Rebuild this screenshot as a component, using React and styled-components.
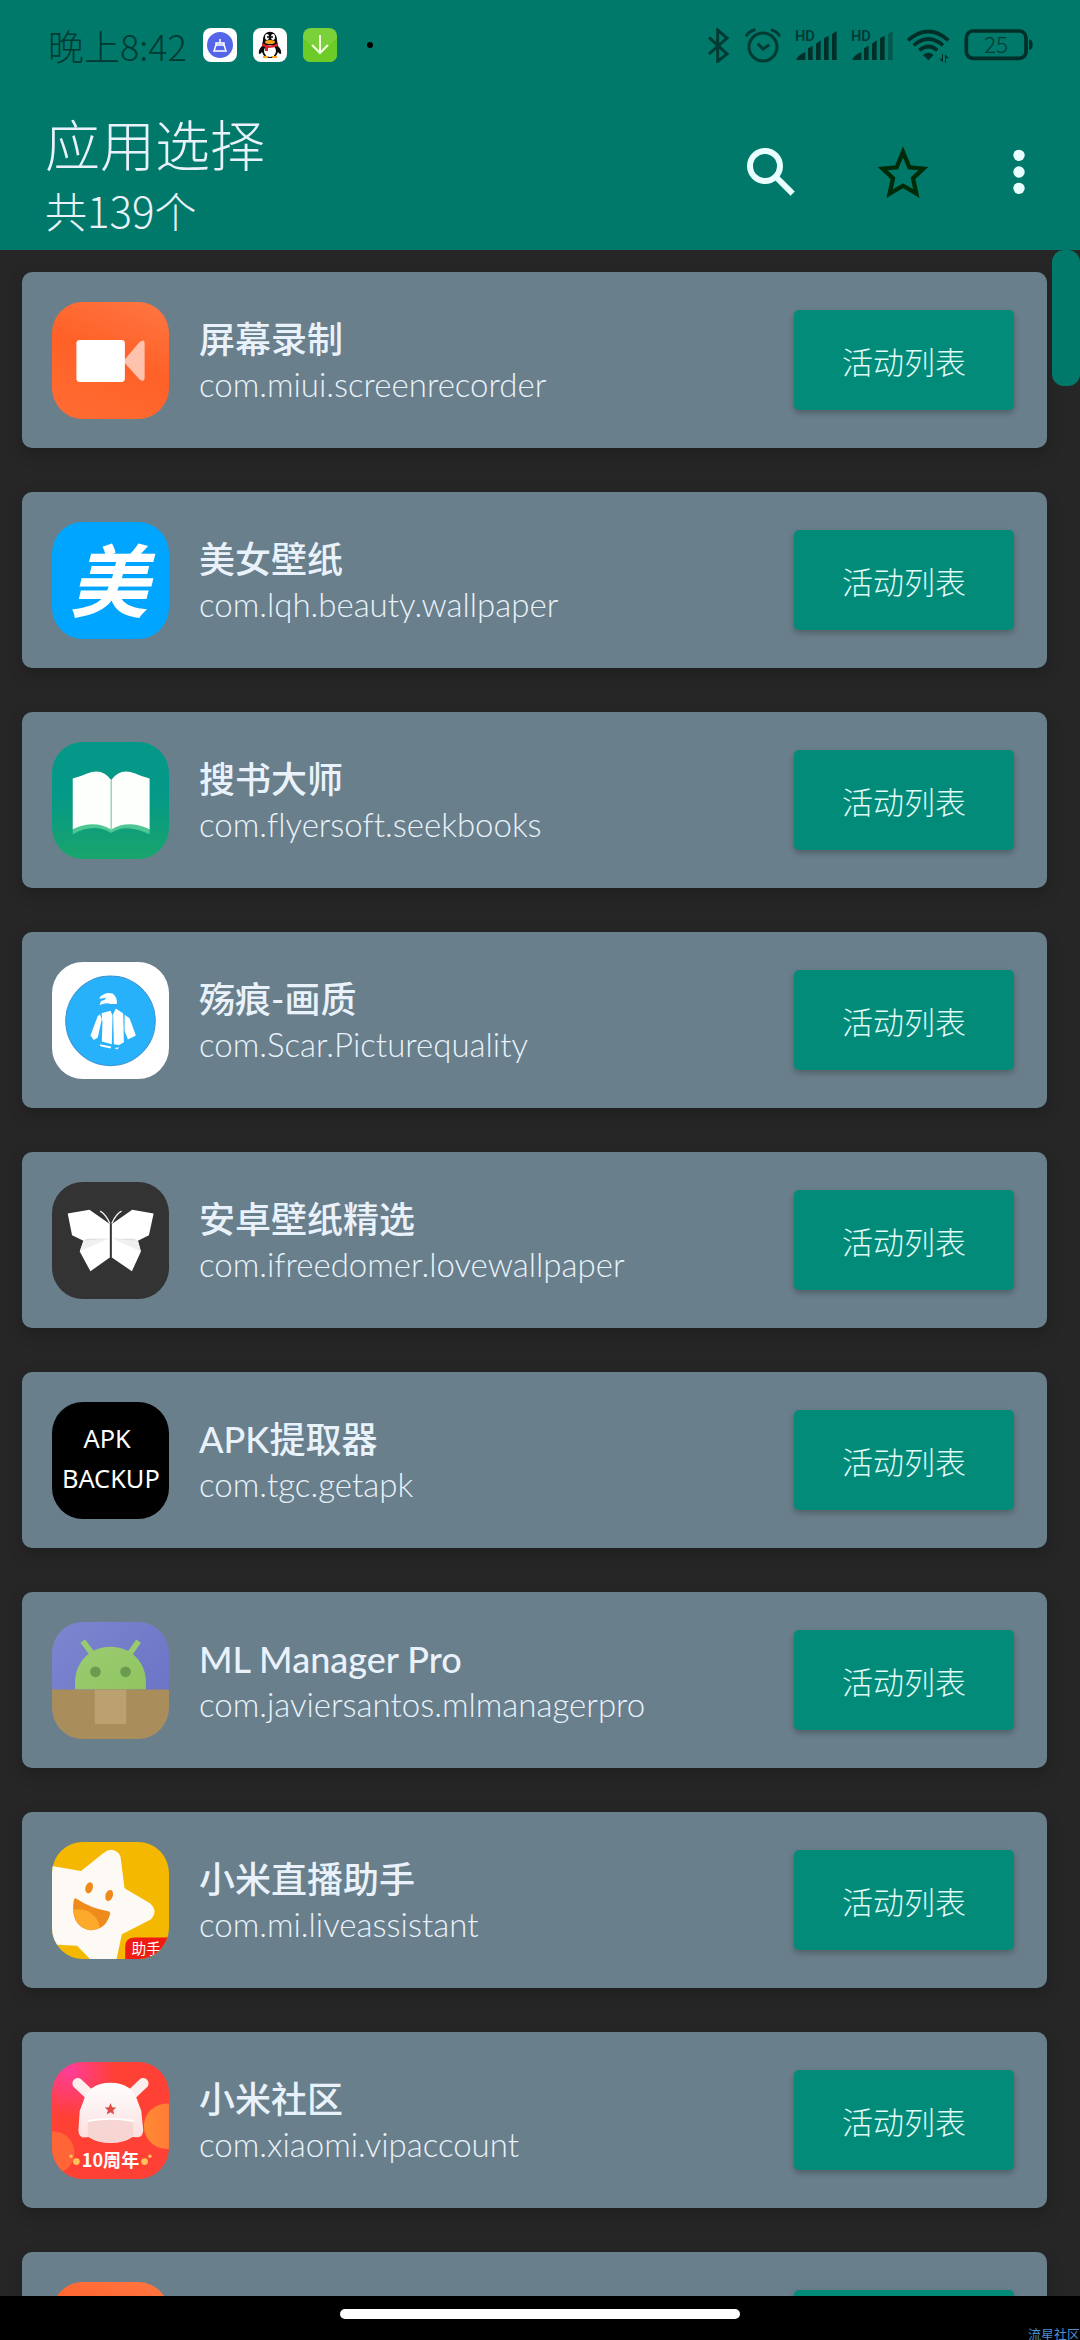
import React from 'react';
import styled, { createGlobalStyle } from 'styled-components';

const GlobalStyle = createGlobalStyle`
  html, body {
    margin: 0;
    background: #000;
  }
  * {
    box-sizing: border-box;
  }
`;

const Screen = styled.div`
  position: relative;
  display: flex;
  flex-direction: column;
  height: 100vh;
  overflow: hidden;
  background: #262626;
  color: #e9f2fb;
  font-family: Lato, "Noto Sans CJK SC", sans-serif;
`;

const Header = styled.header`
  flex: none;
  background: #00796a;
`;

const StatusBar = styled.div`
  display: flex;
  align-items: center;
  justify-content: space-between;
  height: 90px;
  padding: 0 46px 0 48px;
  color: #003b33;
`;

const StatusGroup = styled.div`
  display: flex;
  align-items: center;
  gap: ${props => props.$gap}px;
`;

const Clock = styled.time`
  font-family: "Noto Sans CJK SC", sans-serif;
  font-size: 36px;
  font-weight: 300;
  line-height: 40px;
`;

const StatusIcon = styled.svg`
  display: block;
  flex: none;
  width: ${props => props.$width}px;
  height: ${props => props.$height}px;
`;

const Dot = styled.span`
  width: 6px;
  height: 6px;
  margin-left: 14px;
  border-radius: 50%;
  background: #000;
`;

const Toolbar = styled.div`
  display: flex;
  align-items: center;
  justify-content: space-between;
  height: 160px;
  padding: 4px 41px 0 45px;
`;

const Title = styled.h1`
  margin: 0;
  font-family: "Noto Sans CJK SC", sans-serif;
  font-size: 55px;
  font-weight: 300;
  line-height: 76px;
`;

const Subtitle = styled.p`
  margin: 0;
  font-family: "Noto Sans CJK SC", sans-serif;
  font-size: 42px;
  font-weight: 300;
  line-height: 60px;
`;

const Actions = styled.div`
  display: flex;
  align-items: center;
  gap: 60px;
`;

const IconButton = styled.button`
  display: flex;
  align-items: center;
  justify-content: center;
  width: ${props => props.$width}px;
  height: 72px;
  padding: 0;
  border: 0;
  background: none;
`;

const ListArea = styled.main`
  display: flex;
  flex: 1;
  min-height: 0;
  overflow: hidden;
`;

const AppList = styled.ul`
  flex: 1;
  display: flex;
  flex-direction: column;
  gap: 44px;
  margin: 0;
  padding: 22px 5px 22px 22px;
  list-style: none;
`;

const Card = styled.li`
  display: flex;
  flex: none;
  align-items: center;
  gap: 30px;
  height: 176px;
  padding: 0 33px 0 30px;
  border-radius: 10px;
  background: #697f8b;
  box-shadow: 0 6px 16px rgba(0, 0, 0, 0.2);
`;

const IconFrame = styled.div`
  flex: none;
  width: 117px;
  height: 117px;
  overflow: hidden;
  border-radius: 31px;

  svg {
    display: block;
    width: 100%;
    height: 100%;
  }
`;

const AppText = styled.div`
  flex: 1;
  min-width: 0;
  padding-top: 2px;
`;

const AppName = styled.h2`
  margin: 0;
  font-size: 36px;
  font-weight: 500;
  line-height: 46px;
`;

const PackageName = styled.p`
  margin: 0;
  font-size: 33px;
  font-weight: 300;
  font-variant-ligatures: none;
  line-height: 44px;
`;

const ActivityButton = styled.button`
  flex: none;
  width: 220px;
  height: 100px;
  padding: 0;
  border: 0;
  border-radius: 5px;
  background: #038b7a;
  box-shadow: 0 3px 6px rgba(0, 0, 0, 0.25);
  color: #e0fbf8;
  font-family: "Noto Sans CJK SC", sans-serif;
  font-size: 31px;
  font-weight: 300;
`;

const ScrollTrack = styled.div`
  flex: none;
  width: 28px;
`;

const ScrollThumb = styled.div`
  height: 136px;
  border-radius: 12px;
  background: #00796a;
`;

const NavBar = styled.footer`
  display: flex;
  flex: none;
  align-items: center;
  justify-content: center;
  height: 44px;
  padding-bottom: 8px;
  background: #000;
`;

const HomeHandle = styled.div`
  width: 400px;
  height: 10px;
  border-radius: 5px;
  background: #fff;
`;

const Watermark = styled.span`
  position: absolute;
  right: 0;
  bottom: 0;
  color: #4a8fd0;
  font-family: "Noto Sans CJK SC", sans-serif;
  font-size: 13px;
  line-height: 13px;
`;

const RecorderIcon = () => (
  <svg viewBox="0 0 350 350">
    <defs>
      <linearGradient id="recorder" x1="0.8" y1="0" x2="0.4" y2="1">
        <stop offset="0" stopColor="#ff7440" />
        <stop offset="0.5" stopColor="#ff6128" />
        <stop offset="1" stopColor="#ff6a30" />
      </linearGradient>
    </defs>
    <rect width="350" height="350" fill="url(#recorder)" />
    <path d="M217 173 L262 120 Q277 108 277 124 V226 Q277 242 262 232 L217 182Z" fill="#ffc3ad" />
    <rect x="73" y="114" width="145" height="125" rx="10" fill="#fff" />
  </svg>
);

const BeautyIcon = () => (
  <svg viewBox="0 0 350 350">
    <rect width="350" height="350" fill="#00a5ff" />
    <text
      x="170"
      y="266"
      textAnchor="middle"
      fontFamily="'Noto Sans CJK SC', sans-serif"
      fontSize="236"
      fontWeight="700"
      fontStyle="italic"
      fill="#fff"
    >
      美
    </text>
  </svg>
);

const BookIcon = () => (
  <svg viewBox="35 64 350 350">
    <defs>
      <linearGradient id="book" x1="0" y1="0" x2="0" y2="1">
        <stop offset="0.45" stopColor="#049888" />
        <stop offset="1" stopColor="#19a56c" />
      </linearGradient>
    </defs>
    <rect x="35" y="64" width="350" height="350" fill="url(#book)" />
    <path d="M97 322 Q160 288 212 324 Q264 288 327 322 V340 Q256 306 212 336 Q160 304 97 340Z" fill="#4fc795" />
    <path d="M97 173 Q120 167 140 158 Q186 140 212 178 Q238 140 284 158 Q304 167 327 173 V325 Q262 294 212 326 Q160 294 97 325Z" fill="#fdfffd" />
    <path d="M212 178 V324" stroke="#8ecdb8" strokeWidth="4" />
  </svg>
);

const ScarIcon = () => (
  <svg viewBox="35 724 350 350">
    <rect x="35" y="724" width="350" height="350" fill="#fff" />
    <circle cx="210" cy="900" r="134" fill="#27b1fa" stroke="#3b95d5" strokeWidth="3" />
    <g fill="#fff">
      <path d="M179 828 Q196 812 216 818 Q231 828 229 850 L210 850 Q200 844 177 853 L182 841 Q194 838 198 831 L177 834Z" />
      <path d="M183 877 L210 870 L216 884 L214 970 L184 962 L186 906Z" />
      <path d="M178 880 L184 895 L172 950 L160 957 L150 944Q164 905 172 886Z" />
      <path d="M218 880 L226 863 L248 878 L250 964 L236 972 L220 970Z" />
      <path d="M252 882 L267 892 L286 944 L262 956 L252 930Z" />
      <path d="M178 970 L212 977 L210 983 L180 976Z M222 981 L236 979 L230 986Z" />
    </g>
  </svg>
);

const ButterflyIcon = () => (
  <svg viewBox="35 64 350 350">
    <rect x="35" y="64" width="350" height="350" fill="#333" />
    <path d="M82 158 L147 147 L208 190 V290 L150 331 L118 272 L129 240 L95 223Z" fill="#fff" />
    <path d="M339 158 L275 147 L214 190 V290 L274 331 L301 272 L292 240 L325 223Z" fill="#fff" />
    <path d="M129 240 L208 232 L118 272Z M292 240 L214 232 L301 272Z" fill="#f0f0f0" />
    <path d="M129 240 L140 234 L208 234Z M292 240 L281 234 L214 234Z" fill="#dedede" />
    <path d="M208 188 Q196 160 179 151 M214 188 Q226 160 243 151" fill="none" stroke="#f2f2f2" strokeWidth="4" />
  </svg>
);

const BackupIcon = () => (
  <svg viewBox="35 724 350 350">
    <rect x="35" y="724" width="350" height="350" fill="#000" />
    <g fill="#fff" fontFamily="'Noto Sans', sans-serif" fontSize="76" textAnchor="middle">
      <text x="200" y="861">APK</text>
      <text x="211" y="982">BACKUP</text>
    </g>
  </svg>
);

const ManagerIcon = () => (
  <svg viewBox="35 64 350 350">
    <defs>
      <linearGradient id="sky" x1="0" y1="0" x2="1" y2="1">
        <stop offset="0" stopColor="#7c86cf" />
        <stop offset="1" stopColor="#6770c4" />
      </linearGradient>
      <linearGradient id="robot" x1="0" y1="0" x2="1" y2="1">
        <stop offset="0" stopColor="#9bcb72" />
        <stop offset="1" stopColor="#90c560" />
      </linearGradient>
    </defs>
    <rect x="35" y="64" width="350" height="350" fill="url(#sky)" />
    <path d="M127 121 L157 161 M294 121 L266 161" stroke="#98ca6e" strokeWidth="17" />
    <path d="M104 266 V245 C104 182 150 138 210 138 C270 138 316 182 316 245 V266Z" fill="url(#robot)" />
    <circle cx="165" cy="213" r="16" fill="#6a9c50" />
    <circle cx="255" cy="213" r="16" fill="#6a9c50" />
    <rect x="35" y="266" width="350" height="150" fill="#a98d5a" />
    <rect x="163" y="266" width="94" height="103" fill="#bba170" />
  </svg>
);

const LiveIcon = () => (
  <svg viewBox="35 724 350 350">
    <rect x="35" y="724" width="350" height="350" fill="#f5b800" />
    <path
      d="M20 793 L122 811 L188 758 Q212 736 236 760 Q242 768 242 784 L252 862 L328 907 Q352 928 334 952 Q328 958 316 963 L244 1000 L226 1084 H158 L110 1034 L20 1030Z"
      fill="#fdf9f4"
    />
    <ellipse cx="146" cy="861" rx="11" ry="17" transform="rotate(18 146 861)" fill="#ee8b1c" />
    <ellipse cx="206" cy="884" rx="11" ry="17" transform="rotate(18 206 884)" fill="#ee8b1c" />
    <path d="M107 893 Q150 922 203 931 Q212 934 208 942 Q196 987 150 988 Q98 980 98 920 Q99 888 107 893Z" fill="#ee8b1c" />
    <path d="M99 927 Q136 920 160 944 Q175 958 177 980 Q164 988 150 988 Q104 980 99 927Z" fill="#fda92c" />
    <path d="M254 1080 V1038 Q254 1010 284 1010 H390 V1080Z" fill="#ee1c12" />
    <text x="317" y="1060" textAnchor="middle" fontFamily="'Noto Sans CJK SC', sans-serif" fontSize="44" fill="#fff">
      助手
    </text>
  </svg>
);

const CommunityIcon = () => (
  <svg viewBox="35 64 350 350">
    <defs>
      <radialGradient id="pink" cx="0.15" cy="0.08" r="0.4">
        <stop offset="0" stopColor="#ff3d98" />
        <stop offset="1" stopColor="#ff4034" />
      </radialGradient>
      <linearGradient id="sun" x1="0" y1="0" x2="1" y2="0">
        <stop offset="0" stopColor="#ff8a33" />
        <stop offset="1" stopColor="#ff7138" />
      </linearGradient>
      <linearGradient id="hat" x1="0" y1="0" x2="0" y2="1">
        <stop offset="0" stopColor="#fff" />
        <stop offset="1" stopColor="#fbdcdc" />
      </linearGradient>
    </defs>
    <rect x="35" y="64" width="350" height="350" fill="url(#pink)" />
    <circle cx="378" cy="256" r="68" fill="url(#sun)" />
    <circle cx="38" cy="335" r="64" fill="#ff6536" />
    <path d="M112 128 L146 160 M308 128 L274 160" stroke="#fdeeee" strokeWidth="32" strokeLinecap="round" />
    <path d="M128 184 Q144 126 210 126 Q276 126 292 184 L302 210 L308 268 Q306 290 290 289 L276 288 Q250 306 210 306 Q170 306 144 288 L130 290 Q114 288 114 268 L118 210Z" fill="url(#hat)" />
    <path d="M142 244 Q210 228 278 244 V286 Q250 304 210 304 Q170 304 142 286Z" fill="#f6d5d3" />
    <path d="M142 240 Q210 228 278 240" fill="none" stroke="#fff" strokeWidth="5" />
    <path d="M210 187 L215 199 L227 200 L218 208 L221 221 L210 214 L199 221 L202 208 L193 200 L205 199Z" fill="#e04a48" />
    <circle cx="108" cy="362" r="10" fill="#ffc35c" />
    <circle cx="312" cy="362" r="10" fill="#ffc35c" />
    <circle cx="92" cy="346" r="5" fill="#ffc35c" />
    <circle cx="328" cy="346" r="5" fill="#ffc35c" />
    <text x="210" y="379" textAnchor="middle" fontFamily="'Noto Sans CJK SC', sans-serif" fontSize="54" fontWeight="700" fill="#fff">
      10周年
    </text>
  </svg>
);

const Signal = ({ weak }) => (
  <StatusIcon viewBox="403 72 126 120" $width={42} $height={40} aria-hidden="true">
    <text x="403" y="119" fontFamily="Roboto, sans-serif" fontSize="44" fontWeight="600" fill="#003b33">HD</text>
    <path d="M406 177 Q414 160 434 154 V177Z M442 177 V142 L456 134 V177Z M466 177 V128 L480 118 V177Z M490 177 V112 L504 104 V177Z" fill="#002f29" />
    <path d="M514 177 V99 L528 90 V177Z" fill={weak ? '#00594e' : '#002f29'} />
  </StatusIcon>
);

const apps = [
  { name: '屏幕录制', pkg: 'com.miui.screenrecorder', Icon: RecorderIcon },
  { name: '美女壁纸', pkg: 'com.lqh.beauty.wallpaper', Icon: BeautyIcon },
  { name: '搜书大师', pkg: 'com.flyersoft.seekbooks', Icon: BookIcon },
  { name: '殇痕-画质', pkg: 'com.Scar.Picturequality', Icon: ScarIcon },
  { name: '安卓壁纸精选', pkg: 'com.ifreedomer.lovewallpaper', Icon: ButterflyIcon },
  { name: 'APK提取器', pkg: 'com.tgc.getapk', Icon: BackupIcon },
  { name: 'ML Manager Pro', pkg: 'com.javiersantos.mlmanagerpro', Icon: ManagerIcon },
  { name: '小米直播助手', pkg: 'com.mi.liveassistant', Icon: LiveIcon },
  { name: '小米社区', pkg: 'com.xiaomi.vipaccount', Icon: CommunityIcon },
  { name: '', pkg: '', Icon: RecorderIcon },
];

const AppCard = ({ name, pkg, Icon }) => (
  <Card>
    <IconFrame aria-hidden="true"><Icon /></IconFrame>
    <AppText>
      {name && <AppName>{name}</AppName>}
      {pkg && <PackageName>{pkg}</PackageName>}
    </AppText>
    <ActivityButton type="button" aria-label="活动列表">{name && '活动列表'}</ActivityButton>
  </Card>
);

const StatusRow = () => (
  <StatusBar>
    <StatusGroup $gap={16}>
      <Clock>晚上8:42</Clock>
      <StatusIcon viewBox="0 0 34 34" $width={34} $height={34} aria-hidden="true">
        <rect width="34" height="34" rx="8" fill="#fff" />
        <circle cx="17" cy="17" r="13" fill="#5565ea" />
        <path d="M13 17 H21 L23 23 H11 Z M13 17 V15 H21 V17 M17 11 V15" fill="none" stroke="#fff" strokeWidth="1.5" />
      </StatusIcon>
      <StatusIcon viewBox="0 0 34 34" $width={34} $height={34} aria-hidden="true">
        <rect width="34" height="34" rx="8" fill="#fff" />
        <path d="M10 12 C10 1 24 1 24 12 L25 18 Q29 22 28 26 Q26 26 25 24 Q23 30 17 30 Q11 30 9 24 Q8 26 6 26 Q5 22 9 18Z" fill="#0a0a0a" />
        <ellipse cx="17" cy="23" rx="6" ry="6" fill="#fff" />
        <ellipse cx="14" cy="9" rx="2" ry="3" fill="#fff" />
        <ellipse cx="20" cy="9" rx="2" ry="3" fill="#fff" />
        <circle cx="15" cy="9" r="1" />
        <circle cx="19" cy="9" r="1" />
        <ellipse cx="17" cy="14" rx="5" ry="2" fill="#f6a51c" />
        <path d="M9 15 Q17 20 25 15 V18 Q20 20 15 20 V23 H12 V19 L9 18Z" fill="#d9252a" />
        <path d="M10 29 H15 M19 29 H24" stroke="#f6a51c" strokeWidth="2" />
      </StatusIcon>
      <StatusIcon viewBox="0 0 34 34" $width={34} $height={34} aria-hidden="true">
        <rect width="34" height="34" rx="8" fill="#7bd13a" />
        <path d="M0 10 L17 26 L34 10 V26 Q34 34 26 34 H8 Q0 34 0 26Z" fill="#6ccb27" />
        <path d="M17 7 V25 M9 17 L17 25 L25 17" fill="none" stroke="#f4ffe2" strokeWidth="2" />
      </StatusIcon>
      <Dot />
    </StatusGroup>
    <StatusGroup $gap={14}>
      <StatusIcon viewBox="148 82 72 105" $width={24} $height={35} aria-hidden="true">
        <path d="M154 110 L208 160 L180 182 V88 L208 112 L154 160" fill="none" stroke="#003b33" strokeWidth="9" />
      </StatusIcon>
      <StatusIcon viewBox="261 82 108 105" $width={36} $height={35} aria-hidden="true">
        <g fill="none" stroke="#003b33" strokeWidth="9">
          <circle cx="315" cy="139" r="42" />
          <path d="M299 129 L315 145 L334 132 M264 107 Q272 92 292 87 M339 87 Q358 92 365 107" />
        </g>
      </StatusIcon>
      <Signal />
      <Signal weak />
      <StatusIcon viewBox="738 84 129 105" $width={43} $height={35} aria-hidden="true">
        <g fill="none" stroke="#002f29" strokeWidth="11">
          <path d="M741 121 Q802 68 862 121" />
          <path d="M758 136 Q802 98 846 136" />
          <path d="M775 151 Q802 128 829 151" />
        </g>
        <path d="M786 165 Q802 152 818 165 L802 181Z" fill="#002f29" />
        <path d="M846 163 V187 L835 176 H843 V163Z M852 188 V163 L864 175 H855 V188Z" fill="#002f29" />
      </StatusIcon>
      <StatusIcon viewBox="909 76 210 120" $width={70} $height={40} aria-hidden="true">
        <rect x="916" y="94" width="179" height="82" rx="20" fill="none" stroke="#002f29" strokeWidth="11" />
        <path d="M1104 119 Q1115 120 1115 135 Q1115 150 1104 151Z" fill="#002f29" />
        <text x="1005" y="161" textAnchor="middle" fontFamily="'Noto Sans CJK SC', sans-serif" fontSize="68" fontWeight="300" fill="#003b33">25</text>
      </StatusIcon>
    </StatusGroup>
  </StatusBar>
);

const App = () => (
  <>
    <GlobalStyle />
    <Screen>
      <Header>
        <StatusRow />
        <Toolbar>
          <div>
            <Title>应用选择</Title>
            <Subtitle>共139个</Subtitle>
          </div>
          <Actions>
            <IconButton type="button" aria-label="搜索" $width={72}>
              <svg width="50" height="50" viewBox="255 441 150 150" fill="none" stroke="#e9ffff">
                <circle cx="312" cy="498" r="45" strokeWidth="18" />
                <path d="M345 531 L395 581" strokeWidth="18" />
              </svg>
            </IconButton>
            <IconButton type="button" aria-label="收藏" $width={72}>
              <svg width="54" height="54" viewBox="648 434 162 162" fill="none" stroke="#002b08" strokeWidth="13">
                <path d="M729 455 L748 501 L790 505 L759 534 L769 580 L729 556 L689 580 L699 534 L668 505 L710 501Z" />
              </svg>
            </IconButton>
            <IconButton type="button" aria-label="更多选项" $width={40}>
              <svg width="14" height="46" viewBox="1056 451 42 138" fill="#e9ffff">
                <circle cx="1077" cy="470" r="17" />
                <circle cx="1077" cy="520" r="17" />
                <circle cx="1077" cy="569" r="17" />
              </svg>
            </IconButton>
          </Actions>
        </Toolbar>
      </Header>
      <ListArea>
        <AppList>
          {apps.map((app, index) => (
            <AppCard key={index} {...app} />
          ))}
        </AppList>
        <ScrollTrack>
          <ScrollThumb />
        </ScrollTrack>
      </ListArea>
      <NavBar>
        <HomeHandle />
      </NavBar>
      <Watermark>流星社区</Watermark>
    </Screen>
  </>
);

export default App;
